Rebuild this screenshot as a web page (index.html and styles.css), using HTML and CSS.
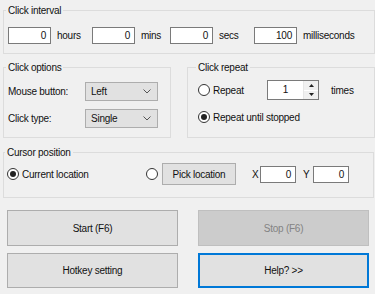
FILE: index.html
```html
<!DOCTYPE html>
<html>
<head>
<meta charset="utf-8">
<link rel="stylesheet" href="styles.css">
</head>
<body>
<div class="app">
  <fieldset class="group g-interval">
    <legend>Click interval</legend>
    <div class="row">
      <div class="unit u-wide"><span class="field f-num">0</span><span class="lbl">hours</span></div>
      <div class="unit u-narrow"><span class="field f-num">0</span><span class="lbl">mins</span></div>
      <div class="unit u-wide"><span class="field f-num">0</span><span class="lbl">secs</span></div>
      <div class="unit"><span class="field f-num">100</span><span class="lbl">milliseconds</span></div>
    </div>
  </fieldset>

  <div class="mid">
    <fieldset class="group g-options">
      <legend>Click options</legend>
      <div class="opt-row">
        <span class="opt-lbl">Mouse button:</span>
        <span class="combo">Left<svg class="chev" width="8" height="5" viewBox="0 0 8 5"><polyline points="0.5,0.5 4,4 7.5,0.5" fill="none" stroke="#555" stroke-width="1"/></svg></span>
      </div>
      <div class="opt-row">
        <span class="opt-lbl">Click type:</span>
        <span class="combo">Single<svg class="chev" width="8" height="5" viewBox="0 0 8 5"><polyline points="0.5,0.5 4,4 7.5,0.5" fill="none" stroke="#555" stroke-width="1"/></svg></span>
      </div>
    </fieldset>

    <fieldset class="group g-repeat">
      <legend>Click repeat</legend>
      <div class="rep-row">
        <span class="radio"></span><span class="rep-lbl rep-short">Repeat</span>
        <span class="spin">
          <span class="spin-val">1</span>
          <span class="spin-btns">
            <span class="spin-btn"><svg width="5" height="3" viewBox="0 0 5 3"><polygon points="0,3 2.5,0 5,3" fill="#222"/></svg></span>
            <span class="spin-btn"><svg width="5" height="3" viewBox="0 0 5 3"><polygon points="0,0 5,0 2.5,3" fill="#222"/></svg></span>
          </span>
        </span>
        <span class="times">times</span>
      </div>
      <div class="rep-row">
        <span class="radio on"></span><span class="rep-lbl">Repeat until stopped</span>
      </div>
    </fieldset>
  </div>

  <fieldset class="group g-cursor">
    <legend>Cursor position</legend>
    <div class="cur-row">
      <span class="radio on"></span><span class="cur-lbl">Current location</span>
      <span class="radio r-pick"></span>
      <span class="btn b-pick">Pick location</span>
      <span class="xy-lbl xl">X</span><span class="field f-xy">0</span>
      <span class="xy-lbl yl">Y</span><span class="field f-xy">0</span>
    </div>
  </fieldset>

  <div class="buttons">
    <span class="btn b-big">Start (F6)</span>
    <span class="btn b-big disabled">Stop (F6)</span>
    <span class="btn b-big">Hotkey setting</span>
    <span class="btn b-big default">Help? &gt;&gt;</span>
  </div>
</div>
</body>
</html>
```

FILE: styles.css
```css
html, body {
  margin: 0;
  padding: 0;
}
body {
  background: #f0f0f0;
  width: 375px;
  height: 294px;
  overflow: hidden;
  font-family: "Liberation Sans", Arial, sans-serif;
  font-size: 10px;
  letter-spacing: -0.25px;
  color: #111;
}
.app {
  padding: 4px 0 0 3px;
}
.group {
  margin: 0;
  border: 1px solid #dcdcdc;
  min-width: 0;
  box-sizing: border-box;
}
.group legend {
  padding: 0 2px;
  margin-left: -2px;
  height: 13px;
  line-height: 13px;
}

/* Click interval */
.g-interval {
  width: 372px;
  padding: 10px 0 9px 4px;
}
.row {
  display: flex;
  height: 17px;
}
.unit {
  display: flex;
  align-items: center;
}
.u-wide { width: 84px; }
.u-narrow { width: 78px; }
.field {
  box-sizing: border-box;
  background: #fff;
  border: 1px solid #7a7a7a;
  height: 17px;
  line-height: 15px;
  text-align: right;
  padding-right: 4px;
}
.f-num { width: 43px; }
.lbl { margin-left: 6px; }

/* middle groups */
.mid {
  display: flex;
  margin-top: 7px;
}
.g-options {
  width: 168px;
  padding: 8px 0 0 4px;
  height: 77px;
}
.opt-row {
  display: flex;
  align-items: center;
  height: 19px;
  margin-bottom: 8px;
}
.opt-lbl {
  width: 77px;
}
.combo {
  box-sizing: border-box;
  width: 73px;
  height: 19px;
  background: #e1e1e1;
  border: 1px solid #adadad;
  display: flex;
  align-items: center;
  justify-content: space-between;
  padding: 0 6px 0 5px;
}
.chev { display: block; }

.g-repeat {
  width: 188px;
  margin-left: 16px;
  padding: 6px 0 0 10px;
  height: 77px;
}
.rep-row {
  display: flex;
  align-items: center;
  height: 20px;
  margin-bottom: 7px;
}
.radio {
  box-sizing: border-box;
  width: 12px;
  height: 12px;
  border-radius: 50%;
  border: 1px solid #333;
  background: #fff;
  display: flex;
  align-items: center;
  justify-content: center;
  flex: none;
}
.radio.on::after {
  content: "";
  width: 6px;
  height: 6px;
  border-radius: 50%;
  background: #222;
}
.rep-lbl { margin-left: 3px; }
.rep-short { width: 54px; }
.spin {
  box-sizing: border-box;
  width: 52px;
  height: 20px;
  border: 1px solid #7a7a7a;
  background: #fff;
  display: flex;
}
.spin-val {
  flex: 1;
  text-align: center;
  line-height: 18px;
}
.spin-btns {
  width: 14px;
  display: flex;
  flex-direction: column;
  border-left: 1px solid #e6e6e6;
}
.spin-btn {
  flex: 1;
  display: flex;
  align-items: center;
  justify-content: center;
  background: #f0f0f0;
}
.spin-btn + .spin-btn {
  border-top: 1px solid #fff;
}
.times { margin-left: 12px; }

/* cursor */
.g-cursor {
  width: 371px;
  margin-top: 8px;
  padding: 4px 0 12px 3px;
}
.cur-row {
  display: flex;
  align-items: center;
  height: 22px;
}
.cur-lbl {
  margin-left: 3px;
  width: 124px;
}
.r-pick {
  margin-left: 0;
}
.btn {
  box-sizing: border-box;
  background: #e1e1e1;
  border: 1px solid #adadad;
  display: flex;
  align-items: center;
  justify-content: center;
}
.b-pick {
  width: 74px;
  height: 22px;
  margin-left: 4px;
}
.xy-lbl {
  width: 8px;
}
.xl { margin-left: 16px; }
.yl { margin-left: 7px; width: 10px; }
.f-xy { width: 36px; }

/* big buttons */
.buttons {
  display: grid;
  grid-template-columns: 171px 171px;
  grid-template-rows: 36px 35px;
  column-gap: 20px;
  row-gap: 7px;
  margin: 12px 0 0 4px;
}
.b-big.disabled {
  background: #cccccc;
  border-color: #bfbfbf;
  color: #838383;
}
.b-big.default {
  border: 2px solid #0078d7;
}
```
